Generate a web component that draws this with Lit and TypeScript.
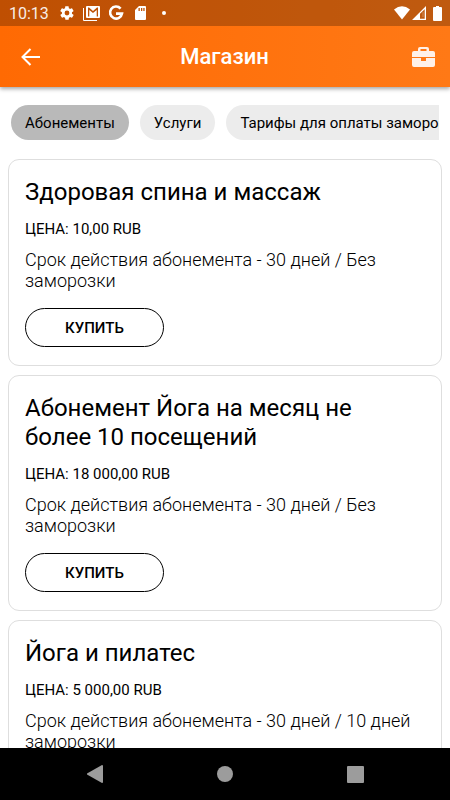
import { LitElement, html, css, svg } from "lit";
import { customElement, property, state } from "lit/decorators.js";
import { classMap } from "lit/directives/class-map.js";

interface Pass {
  title: string;
  price: string;
  terms: string;
}

const TABS = ["Абонементы", "Услуги", "Тарифы для оплаты заморозки"];

const PASSES: Pass[] = [
  { title: "Здоровая спина и массаж", price: "10,00 RUB", terms: "Срок действия абонемента - 30 дней / Без заморозки" },
  { title: "Абонемент Йога на месяц не более 10 посещений", price: "18 000,00 RUB", terms: "Срок действия абонемента - 30 дней / Без заморозки" },
  { title: "Йога и пилатес", price: "5 000,00 RUB", terms: "Срок действия абонемента - 30 дней / 10 дней заморозки" },
];

const gear = svg`<path fill-rule="evenodd" d="M19.4 13c.1-.3.1-.7.1-1s0-.7-.1-1l2.2-1.700c.2-.2.3-.5.1-.7l-2-3.500c-.1-.2-.4-.3-.6-.2l-2.600 1c-.5-.4-1.100-.8-1.700-1l-.4-2.700c0-.2-.2-.4-.5-.4h-4c-.3 0-.5.2-.5.4L9 4.900c-.6.200-1.200.6-1.700 1l-2.600-1c-.2-.1-.5 0-.6.200l-2 3.500c-.1.200-.1.500.1.7L4.500 11c-.1.300-.1.700-.1 1s0 .7.1 1l-2.200 1.700c-.2.200-.3.500-.1.7l2 3.500c.1.200.4.3.6.2l2.600-1c.5.400 1.100.8 1.700 1l.4 2.700c0 .2.200.4.5.4h4c.3 0 .5-.2.500-.4l.4-2.700c.6-.2 1.200-.6 1.700-1l2.600 1c.2.100.5 0 .6-.2l2-3.500c.1-.2.1-.5-.1-.7zM12 15.600a3.600 3.600 0 1 1 0-7.200 3.600 3.600 0 0 1 0 7.200z"/>`;

@customElement("status-bar")
export class StatusBar extends LitElement {
  static styles = css`
    :host {
      display: flex;
      align-items: center;
      height: 26px;
      padding: 0 6px 0 9px;
      background: rgba(0, 0, 0, 0.25);
      color: #fff;
      font-size: 16px;
      line-height: 26px;
    }
    .notices, .signals { display: flex; align-items: center; }
    .notices { gap: 8px; margin-left: 10px; }
    .signals { margin-left: auto; gap: 2px; }
    .time { opacity: 0.9; padding-top: 2px; }
    .dot { width: 4px; height: 4px; margin-left: 6px; border-radius: 50%; background: #fff; }
    svg { display: block; fill: currentColor; }
  `;

  render() {
    return html`
      <span class="time">10:13</span>
      <div class="notices">
        <svg width="16" height="16" viewBox="0 0 24 24">${gear}</svg>
        <svg width="17" height="16" viewBox="0 0 17 16">
          <path d="M0 3h1v12h13v1H1a1 1 0 0 1-1-1z" />
          <path fill-rule="evenodd" d="M4 1h12a1 1 0 0 1 1 1v10a1 1 0 0 1-1 1H4a1 1 0 0 1-1-1V2a1 1 0 0 1 1-1zM5 2.600v9h1.300V5L10 8l3.700-3v6.600H15v-9h-1L10 6 6 2.600z" />
        </svg>
        <svg width="16" height="16" viewBox="0 0 16 16">
          <path fill="none" stroke="currentColor" stroke-width="2.600" d="M12.600 3.600A6 6 0 1 0 14 8.600H8" />
        </svg>
        <svg width="16" height="16" viewBox="0 0 16 16">
          <path fill-rule="evenodd" d="M7 1h6a1 1 0 0 1 1 1v12a1 1 0 0 1-1 1H4a1 1 0 0 1-1-1V5zM6.500 3v3h1.300V3zM9 3v3h1.300V3zM11.300 3v3h1.300V3z" />
        </svg>
        <span class="dot"></span>
      </div>
      <div class="signals">
        <svg width="16" height="14" viewBox="0 0 16 14"><path d="M0 3.500Q8-2.800 16 3.500L8 13.500z" /></svg>
        <svg width="14" height="14" viewBox="0 0 14 14">
          <path fill-rule="evenodd" d="M14 0v14H0zM12.700 3.200V12.700H8V7.800z" />
          <path d="M10.500 6h1v5h-1z" opacity="0.300" />
        </svg>
        <svg width="16" height="15" viewBox="0 0 16 15"><path d="M8 0h3v1h2a1 1 0 0 1 1 1v12a1 1 0 0 1-1 1H6a1 1 0 0 1-1-1V2a1 1 0 0 1 1-1h2z" /></svg>
      </div>
    `;
  }
}

@customElement("pass-card")
export class PassCard extends LitElement {
  @property({ attribute: false }) pass!: Pass;

  static styles = css`
    :host {
      display: block;
      padding: 18px 16px;
      border: 1px solid #dedede;
      border-radius: 11px;
      background: #fff;
    }
    h2, p { margin: 0; }
    h2 { padding-right: 16px; font-size: 24px; line-height: 29px; font-weight: 400; }
    .price { margin-top: 12px; font-size: 15px; line-height: 20px; }
    .terms { margin-top: 10px; font-size: 18px; line-height: 21px; font-weight: 300; }
    button {
      display: block;
      width: 139px;
      height: 39px;
      margin-top: 17px;
      padding: 0;
      border: 1px solid #000;
      border-radius: 20px;
      background: #fff;
      color: #000;
      font: 500 15px/20px Roboto, sans-serif;
      cursor: pointer;
    }
  `;

  render() {
    return html`
      <h2>${this.pass.title}</h2>
      <p class="price">ЦЕНА: ${this.pass.price}</p>
      <p class="terms">${this.pass.terms}</p>
      <button type="button">КУПИТЬ</button>
    `;
  }
}

@customElement("app-root")
export class AppRoot extends LitElement {
  @state() private tab = 0;

  static styles = css`
    :host {
      display: flex;
      flex-direction: column;
      height: 100vh;
      background: #fff;
      color: #000;
      font-family: Roboto, sans-serif;
    }
    .top {
      flex: none;
      position: relative;
      background: linear-gradient(90deg, #ff6a03, #ff7916);
      box-shadow: 0 2px 4px rgba(0, 0, 0, 0.35);
      color: #fff;
    }
    header {
      display: grid;
      grid-template-columns: 1fr auto 1fr;
      align-items: center;
      height: 61px;
      padding: 0 15px 0 18px;
    }
    h1 { margin: 0; padding-right: 4px; font-size: 22px; line-height: 28px; font-weight: 500; }
    button { border: 0; padding: 0; background: none; color: inherit; font: inherit; cursor: pointer; }
    svg { display: block; fill: currentColor; }
    .bag { justify-self: end; opacity: 0.9; }
    .back { justify-self: start; }
    main {
      flex: 1;
      min-height: 0;
      overflow: hidden auto;
      scrollbar-width: none;
      padding: 18px 8px 0;
    }
    .tabs {
      display: flex;
      gap: 11px;
      margin: 0 3px 19px;
      overflow: auto hidden;
      scrollbar-width: none;
    }
    .tab {
      flex: none;
      height: 35px;
      padding: 0 14px;
      border-radius: 18px;
      background: #ececec;
      font-size: 15px;
      line-height: 20px;
      white-space: nowrap;
    }
    .tab.active { background: #b9b9b9; }
    .cards { display: flex; flex-direction: column; gap: 9px; }
    nav {
      flex: none;
      display: grid;
      grid-template-columns: repeat(3, 1fr);
      place-items: center;
      height: 52px;
      padding: 0 30px;
      background: #000;
      color: #9c9c9c;
    }
    nav button { display: grid; place-items: center; width: 32px; height: 32px; }
  `;

  render() {
    return html`
      <div class="top">
        <status-bar></status-bar>
        <header>
          <button class="back" type="button" aria-label="Назад">
            <svg width="24" height="24" viewBox="0 0 24 24">
              <path d="M12.500 4 4.500 12l8 8M5 12h17" fill="none" stroke="currentColor" stroke-width="2" />
            </svg>
          </button>
          <h1>Магазин</h1>
          <button class="bag" type="button" aria-label="Мои покупки">
            <svg width="23" height="20" viewBox="0 0 23 20">
              <path fill-rule="evenodd" d="M8 0h7a2 2 0 0 1 2 2v2h4a2 2 0 0 1 2 2v4H0V6a2 2 0 0 1 2-2h4V2a2 2 0 0 1 2-2zM8.500 2v2h6V2z" />
              <path d="M0 11h9v3h5v-3h9v7a2 2 0 0 1-2 2H2a2 2 0 0 1-2-2z" />
            </svg>
          </button>
        </header>
      </div>
      <main>
        <div class="tabs">
          ${TABS.map(
            (name, i) => html`<button
              type="button"
              class=${classMap({ tab: true, active: i === this.tab })}
              aria-pressed=${i === this.tab}
              @click=${() => (this.tab = i)}
            >${name}</button>`
          )}
        </div>
        <div class="cards">${PASSES.map((pass) => html`<pass-card .pass=${pass}></pass-card>`)}</div>
      </main>
      <nav aria-label="Система">
        <button type="button" aria-label="Назад">
          <svg width="16" height="18" viewBox="0 0 16 18"><path d="M15 0q1 0 1 1v16q0 1-1 1L0 9.500v-1z" /></svg>
        </button>
        <button type="button" aria-label="Домой">
          <svg width="16" height="16" viewBox="0 0 16 16"><circle cx="8" cy="8" r="8" /></svg>
        </button>
        <button type="button" aria-label="Недавние">
          <svg width="17" height="17" viewBox="0 0 17 17"><rect width="17" height="17" rx="1" /></svg>
        </button>
      </nav>
    `;
  }
}
